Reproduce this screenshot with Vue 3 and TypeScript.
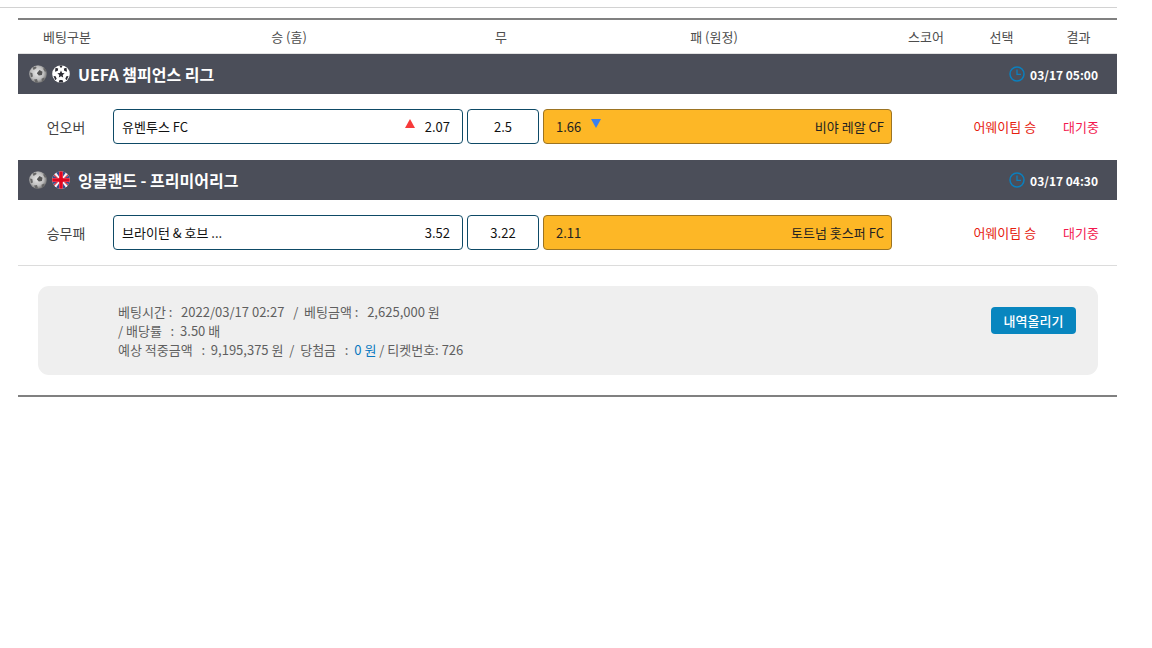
<script setup lang="ts">
interface Game {
  league: string
  flag: 'ucl' | 'uk'
  time: string
  type: string
  home: string
  homeOdds: string
  homeUp: boolean
  draw: string
  awayOdds: string
  awayDown: boolean
  away: string
}
const games: Game[] = [
  { league: 'UEFA 챔피언스 리그', flag: 'ucl', time: '03/17 05:00', type: '언오버', home: '유벤투스 FC', homeOdds: '2.07', homeUp: true, draw: '2.5', awayOdds: '1.66', awayDown: true, away: '비야 레알 CF' },
  { league: '잉글랜드 - 프리미어리그', flag: 'uk', time: '03/17 04:30', type: '승무패', home: '브라이턴 & 호브 ...', homeOdds: '3.52', homeUp: false, draw: '3.22', awayOdds: '2.11', awayDown: false, away: '토트넘 홋스퍼 FC' },
]
const heads = ['베팅구분', '승 (홈)', '무', '패 (원정)', '스코어', '선택', '결과']
</script>

<template>
  <div class="page">
    <div class="topline"></div>
    <div class="board">
      <div class="head">
        <span v-for="h in heads" :key="h">{{ h }}</span>
      </div>
      <template v-for="g in games" :key="g.league">
        <div class="bar">
          <svg class="ico" viewBox="0 0 18 18">
            <defs>
              <radialGradient id="ballg" cx="45%" cy="45%" r="58%">
                <stop offset="0" stop-color="#e8e8e8" />
                <stop offset="0.65" stop-color="#bdbdbd" />
                <stop offset="1" stop-color="#6f6f6f" />
              </radialGradient>
            </defs>
            <circle cx="9" cy="9" r="8.8" fill="url(#ballg)" />
            <path d="M10.500 5l3 1.700-.6 3.200-3.100.7-2-2.300z" fill="#555" />
            <path d="M3.500 2.600L7 1.400l.6 1.600-3 2zM15.500 2.800l2 3.500-1.600.4-1.800-3zM1 7.500l2.300.6.6 3.400-2 .8zM5 14.500l3-.4 1 3.400-2.600-.3zM12.500 13.800l2.800-1.300.2 2.600-2.500 1.800z" fill="#666" />
          </svg>
          <svg v-if="g.flag === 'ucl'" class="ico" viewBox="0 0 18 18">
            <circle cx="9" cy="9" r="8.8" fill="#fff" />
            <path d="M9 5.500l1.100 2.400 2.500.3-1.900 1.700.5 2.500L9 11.200l-2.200 1.200.5-2.500-1.900-1.700 2.500-.3z" fill="#2b2b33" />
            <path d="M3.500 2.800l2.700.7-.4 2.300-2.800 1zM14.500 2.800l-2.700.7.4 2.300 2.800 1zM1.500 11l2.100.2 1.100 2.600-1.400 1.400zM16.500 11l-2.100.2-1.100 2.600 1.400 1.400zM7.500 15h3l.8 2.500H6.700zM7.600.6h2.800L9.900 2.400H8.100z" fill="#2b2b33" />
          </svg>
          <svg v-else class="ico" viewBox="0 0 18 18">
            <defs>
              <clipPath id="flagc"><circle cx="9" cy="9" r="8.800" /></clipPath>
            </defs>
            <g clip-path="url(#flagc)">
              <rect width="18" height="18" fill="#f4f4f6" />
              <path d="M3 0l4 5.500V0zM15 0l-4 5.500V0zM0 3.500L5 7H0zM18 3.500L13 7h5zM0 14.500L5 11H0zM18 14.500L13 11h5zM3 18l4-5.500V18zM15 18l-4-5.500V18z" fill="#3b4a8c" />
              <path d="M0 1l6 6H4.600L0 2.400zM18 1l-6 6h1.400L18 2.400zM0 17l6-6H4.600L0 15.600zM18 17l-6-6h1.400L18 15.600z" fill="#dd1f2f" />
              <rect x="7.200" width="3.600" height="18" fill="#e0061f" />
              <rect y="7.200" width="18" height="3.600" fill="#e0061f" />
            </g>
          </svg>
          <span class="league">{{ g.league }}</span>
          <span class="when">
            <svg class="clock" viewBox="0 0 16 16">
              <circle cx="8" cy="8" r="7" fill="none" stroke="#0b7fbd" stroke-width="1.500" />
              <path d="M8 3.600V8.400H12" fill="none" stroke="#0b7fbd" stroke-width="1.300" />
            </svg>
            {{ g.time }}
          </span>
        </div>
        <div class="row">
          <span class="kind">{{ g.type }}</span>
          <div class="pickbox home">
            <span>{{ g.home }}</span>
            <span class="odds">
              <i v-if="g.homeUp" class="up"></i>
              {{ g.homeOdds }}
            </span>
          </div>
          <div class="pickbox draw">{{ g.draw }}</div>
          <div class="pickbox away">
            <span class="odds">
              {{ g.awayOdds }}
              <i v-if="g.awayDown" class="down"></i>
            </span>
            <span>{{ g.away }}</span>
          </div>
          <span class="choice">어웨이팀 승</span>
          <span class="result">대기중</span>
        </div>
      </template>
      <div class="divider"></div>
      <div class="panel">
        <div class="info">
          <div>베팅시간 : &nbsp; 2022/03/17 02:27 &nbsp; / &nbsp;베팅금액 : &nbsp; 2,625,000 원</div>
          <div>/ 배당률 &nbsp; : &nbsp;3.50 배</div>
          <div>예상 적중금액 &nbsp; : &nbsp;9,195,375 원 &nbsp;/ &nbsp;당첨금 &nbsp; : &nbsp;<b class="win">0 원</b> / 티켓번호: 726</div>
        </div>
        <button class="upload" type="button">내역올리기</button>
      </div>
      <div class="endline"></div>
    </div>
  </div>
</template>

<style>
html, body { background: #fff; }
</style>

<style scoped>
.page {
  width: 1117px;
  font-family: "Noto Sans CJK KR", "Noto Sans", sans-serif;
  font-size: 13px;
  color: #444;
}
.topline {
  height: 7px;
  border-bottom: 1px solid #d2d2d2;
  margin-bottom: 10px;
}
.board {
  margin-left: 18px;
}
.head {
  display: grid;
  grid-template-columns: 98px 346px 78px 348px 76px 75px 79px;
  align-items: center;
  height: 33px;
  border-top: 2px solid #808080;
  border-bottom: 1px solid #e2e2e2;
  text-align: center;
  color: #4d4d4d;
}
.bar {
  display: flex;
  align-items: center;
  height: 40px;
  padding: 0 19px 0 11px;
  background: #4b4e59;
  color: #fff;
}
.ico {
  width: 18px;
  height: 18px;
  margin-right: 5px;
  flex: none;
}
.league {
  margin-left: 3px;
  font-size: 16px;
  font-weight: 700;
}
.when {
  margin-left: auto;
  display: flex;
  align-items: center;
  gap: 5px;
  font-size: 12px;
  font-weight: 700;
}
.clock { width: 16px; height: 16px; }
.row {
  display: grid;
  grid-template-columns: 91px 350px 72px 349px 1fr auto;
  column-gap: 4px;
  align-items: center;
  box-sizing: border-box;
  height: 66px;
  padding: 0 18px 1px 0;
  color: #111;
}
.kind {
  padding-left: 5px;
  text-align: center;
  color: #444;
  font-size: 14px;
}
.pickbox {
  display: flex;
  align-items: center;
  justify-content: space-between;
  box-sizing: border-box;
  height: 35px;
  border: 1px solid #0e4a66;
  border-radius: 4px;
  background: #fff;
}
.home { padding: 0 12px 0 8px; }
.draw { justify-content: center; }
.away {
  padding: 0 7px 0 12px;
  background: #fdb726;
  border-color: #9c7423;
  color: #222;
}
.odds {
  display: flex;
  align-items: center;
}
.up, .down {
  width: 0;
  height: 0;
  border-left: 5px solid transparent;
  border-right: 5px solid transparent;
  margin-top: -6px;
}
.up {
  border-bottom: 9px solid #f73a3a;
  margin-right: 10px;
  margin-left: -2px;
}
.down {
  border-top: 9px solid #3a80ef;
  margin-left: 10px;
}
.choice {
  justify-self: end;
  margin-right: 23px;
  color: #e6200f;
}
.result {
  color: #f3174f;
}
.divider {
  height: 1px;
  background: #dcdcdc;
  margin-top: -1px;
}
.panel {
  display: flex;
  justify-content: space-between;
  align-items: flex-start;
  height: 89px;
  box-sizing: border-box;
  margin: 20px 19px 20px 20px;
  padding: 16px 22px 0 80px;
  border-radius: 11px;
  background: #efefef;
  color: #5f5f5f;
  line-height: 19px;
}
.win {
  font-weight: 400;
  color: #0a78c0;
}
.upload {
  width: 85px;
  height: 27px;
  margin-top: 5px;
  padding: 0;
  border: 0;
  border-radius: 4px;
  background: #0886bf;
  color: #fff;
  font: inherit;
  font-weight: 500;
}
.endline {
  height: 2px;
  background: #808080;
}
</style>
